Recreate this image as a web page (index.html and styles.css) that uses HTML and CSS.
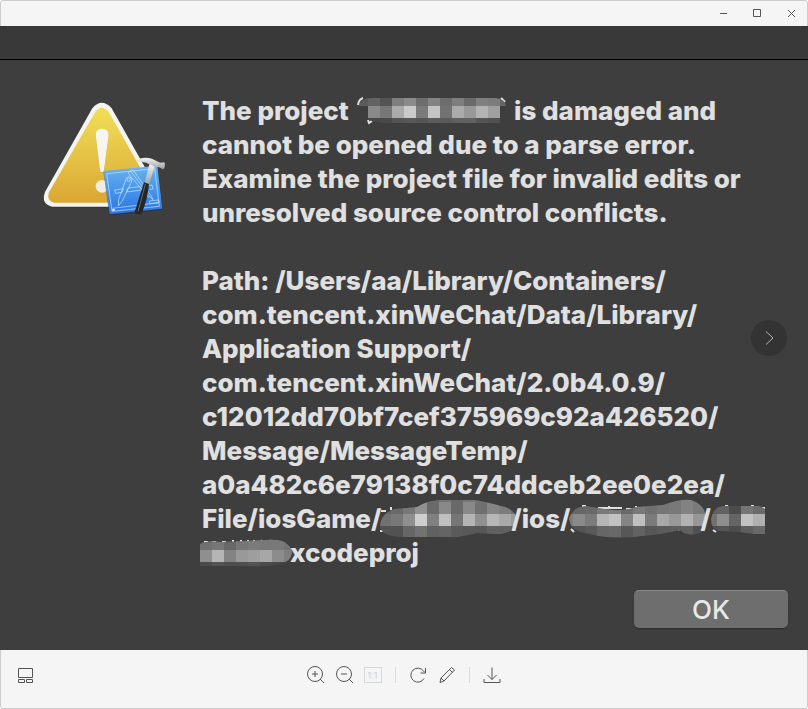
FILE: index.html
```html
<!DOCTYPE html>
<html lang="en">

<head>
  <meta charset="utf-8">
  <meta name="viewport" content="width=device-width, initial-scale=1">
  <title>Image viewer</title>
  <link rel="stylesheet" href="styles.css">
</head>

<body>
  <div class="window">
    <header class="titlebar">
      <button class="titlebar__button" aria-label="Minimize">
        <svg viewBox="0 0 12 12"><path d="M3 6.500h7" /></svg>
      </button>
      <button class="titlebar__button" aria-label="Maximize">
        <svg viewBox="0 0 12 12"><path d="M2.500 2.500h7v7h-7z" /></svg>
      </button>
      <button class="titlebar__button" aria-label="Close">
        <svg viewBox="0 0 12 12"><path d="M3 3l7 7M10 3l-7 7" /></svg>
      </button>
    </header>

    <main class="viewer">
      <div class="strip"></div>
      <section class="dialog">
        <div class="dialog__body">
          <svg class="warning" viewBox="0 0 450 420" role="img" aria-label="Warning">
            <defs>
              <linearGradient id="yellow" x1="0" y1="0" x2="0" y2="1">
                <stop offset="0" stop-color="#f0df57" />
                <stop offset="1" stop-color="#dba733" />
              </linearGradient>
              <linearGradient id="blue" x1="0" y1="0" x2="0" y2="1">
                <stop offset="0" stop-color="#68b4f0" />
                <stop offset="1" stop-color="#2874e4" />
              </linearGradient>
              <linearGradient id="steel" x1="0" y1="0" x2="0" y2="1">
                <stop offset="0" stop-color="#f4f4f4" />
                <stop offset="1" stop-color="#9a9da2" />
              </linearGradient>
            </defs>
            <path d="M187 57Q215 22 245 57L390 315Q400 347 364 353H66Q32 345 45 309Z" fill="#222" opacity=".35" />
            <path d="M187 55Q215 22 245 55L390 312Q400 344 364 350H66Q32 342 45 306Z" fill="#f5f4f1" />
            <path d="M196 65Q215 41 236 65L374 310Q382 332 360 338H72Q48 332 57 307Z" fill="url(#yellow)" />
            <path d="M197 136Q197 117 216 117T236 136L222 242Q221 249 216 249T210 242Z" fill="#b78e2c" opacity=".5" />
            <path d="M197 135Q197 116 216 116T236 135L222 240Q221 247 216 247T210 240Z" fill="#f7f5ef" />
            <circle cx="216" cy="289" r="19" fill="#f1ede2" />
            <path d="M220 246L383 229L399 360L238 376Z" fill="#222" opacity=".35" />
            <path d="M221 243L382 227L397 356L239 373Z" fill="url(#blue)" />
            <g fill="none" stroke="#c9e7ff" stroke-width="2">
              <path d="M230 251L374 236L388 349L246 364ZM247 355L387 338M360 341L387 338L386 330L358 333Z" />
              <path d="M289 265Q297 256 306 265L304 277L276 334L265 348L266 328ZM304 246L359 320L369 329L362 315L311 242L304 241L294 249L301 258L357 323" />
              <path d="M254 300L281 296L276 307L257 310ZM294 294L330 290L336 300L289 306ZM353 286L366 285L369 297L359 299" />
              <circle cx="296" cy="269" r="5" />
            </g>
            <path d="M247 357h7v5h-7z" fill="#fff" />
            <path d="M359 219L376 225L355 288L342 286Z" fill="url(#steel)" />
            <path d="M342 277L357 282Q353 326 336 369Q332 377 316 370Q312 369 317 356Z" fill="#252628" />
            <path d="M346 282Q335 326 324 364" fill="none" stroke="#66696e" stroke-width="3" />
            <path d="M321 209Q340 200 366 206L381 214L391 218L402 217Q406 219 404 231Q402 239 397 237L388 232L376 231Q367 224 354 221Q344 216 321 213Z" fill="url(#steel)" />
          </svg>

          <p class="message">
            The project <svg class="redacted redacted--name" data-mosaic="name" aria-label="redacted"></svg> is damaged and<br>
            cannot be opened due to a parse error.<br>
            Examine the project file for invalid edits or<br>
            unresolved source control conflicts.<br>
            <br>
            Path: /Users/aa/Library/Containers/<br>
            com.tencent.xinWeChat/Data/Library/<br>
            Application Support/<br>
            com.tencent.xinWeChat/2.0b4.0.9/<br>
            c12012dd70bf7cef375969c92a426520/<br>
            Message/MessageTemp/<br>
            a0a482c6e79138f0c74ddceb2ee0e2ea/<br>
            File/iosGame/<svg class="redacted redacted--folder" data-mosaic="folder" aria-label="redacted"></svg>/ios/<svg class="redacted redacted--folder" data-mosaic="subfolder" aria-label="redacted"></svg>/<svg class="redacted redacted--tail" data-mosaic="tail" aria-label="redacted"></svg><br>
            <svg class="redacted redacted--file" data-mosaic="file" aria-label="redacted"></svg>xcodeproj
          </p>
        </div>
        <div class="dialog__actions">
          <button class="ok">OK</button>
        </div>
      </section>
      <button class="next" aria-label="Next image">
        <svg viewBox="0 0 36 36"><path d="M15 11.500l7 6.500-7 6.500" /></svg>
      </button>
    </main>

    <footer class="toolbar">
      <button class="tool" aria-label="Thumbnails">
        <svg viewBox="0 0 20 20"><path d="M3.500 3.500h14v9h-14zM3.500 14.500h6v3h-6zM11.500 14.500h6v3h-6z" /></svg>
      </button>
      <div class="toolbar__group">
        <button class="tool" aria-label="Zoom in">
          <svg viewBox="0 0 20 20"><circle cx="10" cy="9" r="7.500" /><path d="M7 9h6M10 6v6M15 14l4 4" /></svg>
        </button>
        <button class="tool" aria-label="Zoom out">
          <svg viewBox="0 0 20 20"><circle cx="10" cy="9" r="7.500" /><path d="M7 9h6M15 14l4 4" /></svg>
        </button>
        <button class="tool tool--actual" aria-label="Actual size" disabled>1:1</button>
        <span class="divider"></span>
        <button class="tool" aria-label="Rotate">
          <svg viewBox="0 0 20 20"><path d="M16 13.500A7 7 0 1 1 15.500 6L17 7.500M17.500 3v5h-5" /></svg>
        </button>
        <button class="tool" aria-label="Edit">
          <svg viewBox="0 0 20 20"><path d="M3 17.500l1-4.500L14.500 2.500l3 2.500L7 16ZM12.500 4.500l3 3M4 13l3 3" /></svg>
        </button>
        <span class="divider"></span>
        <button class="tool" aria-label="Download">
          <svg viewBox="0 0 20 20"><path d="M10 2.500v12M5.500 10l4.500 4.500 4.500-4.500M2 14v3.500h16V14" /></svg>
        </button>
      </div>
    </footer>
  </div>
  <script src="mosaic.js"></script>
</body>

</html>
```

FILE: styles.css
```css
:root {
  --chrome: #f5f5f5;
  --stroke: #555;
  --panel: #3e3e3e;
  --line: 34px;
}

* {
  box-sizing: border-box;
}

body {
  margin: 0;
  font-family: Inter, "Liberation Sans", sans-serif;
}

button {
  padding: 0;
  border: 0;
  background: none;
  font-family: inherit;
}

.window {
  display: flex;
  flex-direction: column;
  min-height: 100vh;
  border: 1px solid #ccc;
  border-radius: 3px;
  background: var(--chrome);
}

.titlebar {
  display: flex;
  justify-content: flex-end;
  gap: 22px;
  padding: 6px 10px 7px;
}

.titlebar__button {
  width: 12px;
  height: 12px;
}

.titlebar svg,
.tool svg,
.next svg {
  display: block;
  fill: none;
  stroke: var(--stroke);
}

.viewer {
  position: relative;
  flex: 1;
  margin: 0 -1px;
  background: var(--panel);
}

.strip {
  height: 34px;
  border-bottom: 1px solid #000;
  background: #393939;
}

.dialog {
  padding: 30px 20px 22px 30px;
}

.dialog__body {
  display: flex;
  align-items: flex-start;
  gap: 22px;
}

.warning {
  flex: none;
  width: 150px;
  height: 140px;
}

.message {
  margin: 0;
  padding-top: 4px;
  color: #e0e0e0;
  font-size: 26px;
  font-weight: 800;
  line-height: var(--line);
  white-space: nowrap;
}

.redacted {
  height: var(--line);
  overflow: visible;
  vertical-align: top;
}

.redacted--name {
  width: 152px;
  margin-left: 2px;
}

.redacted--folder {
  width: 130px;
}

.redacted--tail {
  width: 54px;
}

.redacted--file {
  width: 88px;
}

.dialog__actions {
  display: flex;
  justify-content: flex-end;
  margin-top: 20px;
}

.ok {
  width: 154px;
  height: 38px;
  border-top: 1px solid #898989;
  border-radius: 5px;
  background: #6e6e6e;
  box-shadow: 0 1px 1px #2c2c2c;
  color: #e8e8e8;
  font-size: 26px;
  font-weight: 500;
}

.next {
  position: absolute;
  top: calc(50% - 18px);
  right: 21px;
  width: 36px;
  height: 36px;
  border-radius: 50%;
  background: #333;
}

.next svg {
  stroke: #b5b5b5;
}

.toolbar {
  display: grid;
  grid-template-columns: 1fr auto 1fr;
  align-items: center;
  height: 58px;
  padding: 0 16px 8px 14px;
}

.toolbar__group {
  display: flex;
  align-items: center;
  gap: 9px;
}

.tool {
  width: 20px;
  height: 20px;
}

.tool--actual {
  width: 18px;
  height: 16px;
  margin: 0 1px;
  border: 1px solid #d8d8d8;
  color: #d0d0d0;
  font-size: 9px;
}

.divider {
  width: 1px;
  height: 16px;
  margin: 0 3px;
  background: #ddd;
}
```

FILE: mosaic.js
```js
// Pixelated patches: each row is [y, height, greys], 12px cells starting at x.
const CELL = 12;
const MOSAICS = {
  name: {
    x: 0,
    shape: 'M3 12Q4 4 16 4H140Q149 5 150 12H144V29H28Q14 28 12 24V12Z',
    bits: 'M2 11Q3 5 7 4M145 4l4 4M12 26l1 3 3-2',
    rows: [
      [4, 8, '5b 63 53 7e 8b 6d 83 6d 7e 6a 80 7c 66'],
      [12, 12, '45 8a 77 ab ca 7a c4 72 ab 99 b4 a0 45'],
      [24, 5, '45 48 49 54 58 55 5c 5a 60 62 55 50 45']
    ]
  },
  folder: {
    x: -2,
    shape: 'M-1 25Q-1 12 13 7L36 5Q45 -1 58 -2H94Q110 1 120 4Q135 7 136 18T120 32Q106 32 96 31Q78 36 68 35H20Q1 34 -1 25Z',
    bits: 'M0 9h5M10 5v3M-1 29h3',
    rows: [
      [-4, 4, '6b 6b 6b 78 6b 74 68 77 77 6e 6b 6b'],
      [0, 12, '65 6a 78 91 6a 89 69 89 70 85 7c 73'],
      [12, 12, '71 78 8f ce 80 bf 76 b4 90 b7 a9 9a'],
      [24, 14, '52 52 66 72 61 64 5b 58 57 61 61 5b']
    ]
  },
  subfolder: {
    x: -9,
    shape: 'M-1 17Q2 5 16 4L35 7Q52 10 66 5L93 3Q109 -3 121 -2Q136 3 136 17T126 32Q117 34 110 28Q90 33 72 34Q52 37 28 34L10 30Q1 28 -1 17Z',
    bits: 'M12 4h4M28 6h24M39 4v2M56 7h13M66 4v2M1 27l3 3M108 28l3-2M113 28l3 2',
    rows: [
      [-4, 16, '62 66 69 78 7e 69 79 70 76 79 82 7a 72'],
      [12, 12, '7d 8a 7b b5 c3 85 bf 7b a8 98 b2 96 81'],
      [24, 14, '50 53 59 66 69 57 63 57 5b 5e 61 50 4c']
    ]
  },
  tail: {
    x: -6,
    shape: 'M0 17Q2 5 12 4H48Q52 5 54 7V32H43Q36 31 28 30L8 29Q0 27 0 17Z',
    bits: 'M14 4h3M40 4h3M46 6h8M2 28l3 2',
    rows: [
      [0, 12, '5f 63 4c 75 6b'],
      [12, 12, '72 8e 65 c1 b0'],
      [24, 12, '50 54 4d 5f 69']
    ]
  },
  file: {
    x: -2,
    shape: 'M-2 8Q5 4 18 6L64 4Q81 3 85 8Q90 12 90 17Q89 25 79 28Q65 31 50 30H-2Z',
    bits: 'M2 6h4M10 6h4M20 6h4M31 4v3M39 4v3M46 4v3M52 4v3M59 4l2 3M68 4l2 3M75 4v3',
    rows: [
      [2, 12, '70 77 68 77 7b 78 79 73'],
      [14, 12, '8f b5 83 99 9e a7 8c 7e'],
      [26, 6, '4a 54 4d 4f 53 4b 47 46']
    ]
  }
};

document.querySelectorAll('[data-mosaic]').forEach((svg) => {
  const id = svg.dataset.mosaic;
  const { x, shape, bits, rows } = MOSAICS[id];
  const cells = rows.map(([y, height, greys]) => greys.split(' ').map((g, i) =>
    `<rect x="${x + i * CELL}" y="${y}" width="${CELL}" height="${height}" fill="#${g}${g}${g}"/>`
  ).join('')).join('');

  svg.innerHTML = `
    <clipPath id="clip-${id}"><path d="${shape}"/></clipPath>
    <path d="${bits}" fill="none" stroke="#e0e0e0" stroke-width="2"/>
    <g clip-path="url(#clip-${id})" shape-rendering="crispEdges">${cells}</g>`;
});
```
